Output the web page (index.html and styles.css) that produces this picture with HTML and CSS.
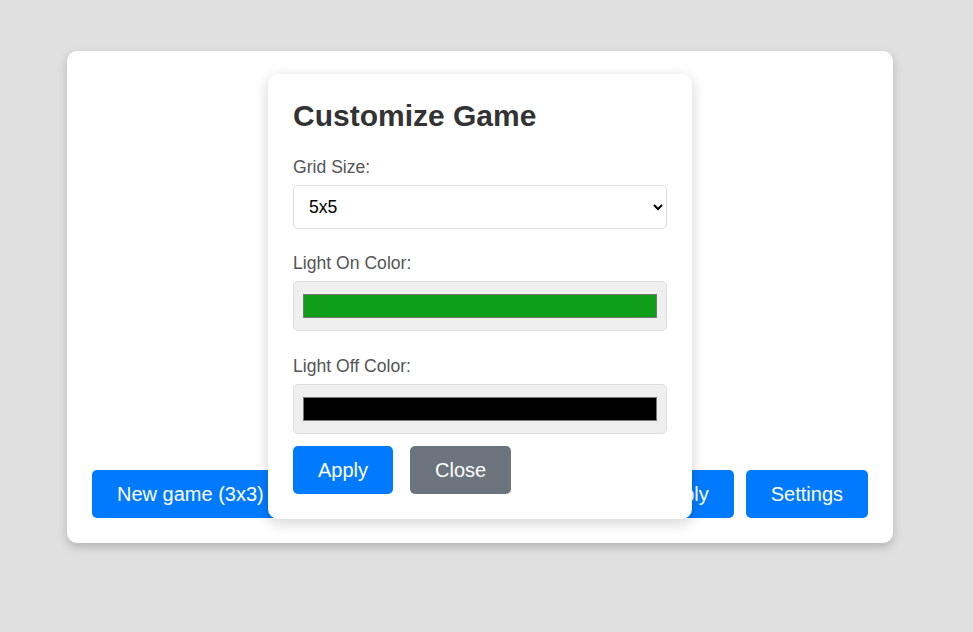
FILE: index.html
```html
<!DOCTYPE html>
<html lang="en">
<head>
<meta charset="utf-8">
<title>Lights Out</title>
<link rel="stylesheet" href="styles.css">
</head>
<body>
<div class="card">
  <div class="board"></div>
  <div class="controls">
    <button class="btn btn-primary push-left">New game (3x3)</button>
    <button class="btn btn-primary">Undo</button>
    <button class="btn btn-primary">Apply</button>
    <button class="btn btn-primary">Settings</button>
  </div>
</div>
<div class="modal">
  <h2 class="modal-title">Customize Game</h2>
  <label class="field-label" for="grid">Grid Size:</label>
  <select id="grid" class="field-select">
    <option>3x3</option>
    <option>4x4</option>
    <option selected>5x5</option>
  </select>
  <label class="field-label" for="on">Light On Color:</label>
  <input id="on" class="field-color" type="color" value="#0e9e1a">
  <label class="field-label" for="off">Light Off Color:</label>
  <input id="off" class="field-color last" type="color" value="#000000">
  <div class="modal-actions">
    <button class="btn btn-primary">Apply</button>
    <button class="btn btn-secondary">Close</button>
  </div>
</div>
</body>
</html>
```

FILE: styles.css
```css
html, body {
  margin: 0;
  padding: 0;
}
body {
  background: #e0e0e0;
  font-family: "Liberation Sans", Arial, sans-serif;
  padding: 51px 0 0 67px;
  min-height: 632px;
  box-sizing: border-box;
}
.card {
  width: 826px;
  height: 492px;
  box-sizing: border-box;
  background: #fff;
  border-radius: 10px;
  box-shadow: 0 4px 10px rgba(0, 0, 0, 0.2);
  padding: 25px;
  display: flex;
  flex-direction: column;
  justify-content: flex-end;
}
.board {
  flex: 1;
}
.controls {
  display: flex;
  justify-content: flex-end;
  gap: 12px;
}
.push-left {
  margin-right: auto;
}
.btn {
  font-family: "Liberation Sans", Arial, sans-serif;
  font-size: 20px;
  line-height: 24px;
  padding: 12px 25px;
  border: none;
  border-radius: 5px;
  color: #fff;
  cursor: pointer;
}
.btn-primary {
  background: #007bff;
}
.btn-secondary {
  background: #6c757d;
}
.modal {
  position: absolute;
  left: 268px;
  top: 74px;
  width: 424px;
  box-sizing: border-box;
  padding: 25px;
  background: #fff;
  border-radius: 10px;
  box-shadow: 0 4px 14px rgba(0, 0, 0, 0.18);
  display: flex;
  flex-direction: column;
}
.modal-title {
  margin: 0 0 24px;
  font-size: 30px;
  line-height: 34px;
  font-weight: bold;
  color: #333;
}
.field-label {
  display: block;
  font-size: 17.6px;
  line-height: 20px;
  color: #555;
  margin-bottom: 8px;
}
.field-select {
  width: 100%;
  height: 44px;
  box-sizing: border-box;
  padding: 0 11px;
  font-family: "Liberation Sans", Arial, sans-serif;
  font-size: 17.6px;
  color: #000;
  background: #fff;
  border: 1px solid #ddd;
  border-radius: 5px;
  margin: 0 0 24px;
}
.field-color {
  width: 100%;
  height: 50px;
  box-sizing: border-box;
  padding: 12px 9px;
  margin: 0 0 25px;
  background: #efefef;
  border: 1px solid #ddd;
  border-radius: 5px;
  cursor: pointer;
}
.field-color::-webkit-color-swatch-wrapper {
  padding: 0;
}
.field-color::-webkit-color-swatch {
  border: 1px solid #777;
  border-radius: 0;
}
.field-color.last {
  margin-bottom: 12px;
}
.modal-actions {
  display: flex;
  gap: 17px;
}
```
